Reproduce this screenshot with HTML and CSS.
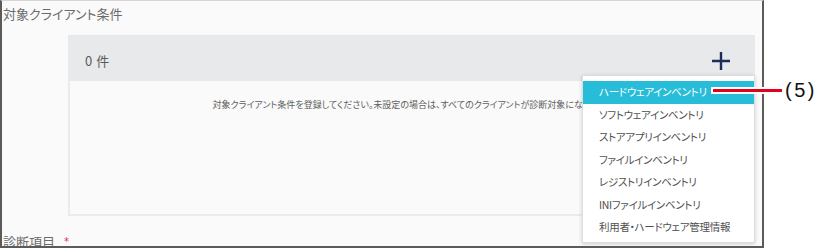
FILE: index.html
```html
<!DOCTYPE html>
<html lang="ja">
<head>
<meta charset="utf-8">
<title>対象クライアント条件</title>
<link rel="stylesheet" href="styles.css">
</head>
<body>
<div class="stage">
  <div class="shot">
    <div class="title">対象クライアント条件</div>
    <div class="panel">
      <div class="panel-head">
        <span class="count">0 件</span>
        <svg class="plus" width="20" height="20" viewBox="0 0 20 20" aria-hidden="true">
          <path d="M10 1V19M1 10H19" stroke="#1f2b5b" stroke-width="2.4" fill="none"/>
        </svg>
      </div>
      <div class="panel-body">
        <p class="hint">対象クライアント条件を登録してください。未設定の場合は、すべてのクライアントが診断対象になります。</p>
      </div>
    </div>
    <div class="label">診断項目<span class="req">*</span></div>
    <ul class="menu">
      <li class="item active">ハードウェアインベントリ</li>
      <li class="item">ソフトウェアインベントリ</li>
      <li class="item">ストアアプリインベントリ</li>
      <li class="item">ファイルインベントリ</li>
      <li class="item">レジストリインベントリ</li>
      <li class="item">INIファイルインベントリ</li>
      <li class="item">利用者・ハードウェア管理情報</li>
    </ul>
  </div>
  <div class="callout">
    <span class="callout-line"></span>
    <span class="callout-num">(5)</span>
  </div>
</div>
</body>
</html>
```

FILE: styles.css
```css
* { box-sizing: border-box; }
html, body { margin: 0; padding: 0; background: #ffffff; }
body {
  font-family: "Noto Sans CJK JP", "Noto Sans", sans-serif;
  font-feature-settings: "palt";
  color: #5c5c5c;
}
.stage {
  position: relative;
  width: 821px;
  height: 248px;
  display: flex;
}
.shot {
  position: relative;
  width: 764px;
  height: 248px;
  background: #fafafa;
  border-top: 1px solid #d6d6d6;
  border-left: 2px solid #5e5a58;
  border-right: 2px solid #5e5a58;
  border-bottom: 2px solid #5e5a58;
  overflow: hidden;
}
.title {
  padding: 3px 0 0 1px;
  height: 23px;
  font-size: 13px;
  line-height: 20px;
  color: #6a6a6a;
}
.panel {
  margin: 11px 7px 0 66px;
  width: 687px;
}
.panel-head {
  height: 46px;
  padding: 4px 0 0 17px;
  background: #e8e9eb;
  display: flex;
  align-items: center;
  justify-content: space-between;
}
.count {
  font-size: 13px;
  color: #5a5a5a;
  letter-spacing: 0.5px;
}
.plus { margin-right: 24px; margin-top: 1px; }
.panel-body {
  height: 135px;
  border: 2px solid #ebebeb;
  border-top: none;
  background: #fafafa;
  padding-top: 17px;
}
.hint {
  margin: 0;
  text-align: center;
  font-size: 9px;
  line-height: 14px;
  color: #606060;
}
.label {
  margin-top: 16px;
  padding-left: 1px;
  font-size: 13px;
  line-height: 20px;
  color: #6a6a6a;
  display: flex;
  align-items: center;
}
.req {
  margin-left: 9px;
  color: #e0305a;
  font-family: "DejaVu Sans", sans-serif;
  font-size: 10px;
  line-height: 10px;
}
.menu {
  position: absolute;
  left: 580px;
  top: 74px;
  width: 173px;
  margin: 0;
  padding: 5px 0 3px;
  list-style: none;
  background: #ffffff;
  border: 1px solid #dedede;
  box-shadow: 0 1px 4px rgba(0, 0, 0, 0.18);
}
.item {
  height: 22.5px;
  line-height: 22.5px;
  padding-left: 16px;
  font-size: 10.5px;
  letter-spacing: -0.3px;
  color: #505050;
  white-space: nowrap;
}
.item.active {
  background: #27bdd8;
  color: #ffffff;
}
.callout {
  position: absolute;
  left: 713px;
  top: 80px;
  display: flex;
  align-items: center;
  height: 20px;
}
.callout-line {
  width: 69px;
  height: 3px;
  background: #e2001c;
  box-shadow: 0 0 0 2px #ffffff;
}
.callout-num {
  margin-left: 3px;
  font-family: "Liberation Sans", Arial, sans-serif;
  font-size: 20px;
  line-height: 20px;
  letter-spacing: 2.5px;
  color: #111111;
}
```
